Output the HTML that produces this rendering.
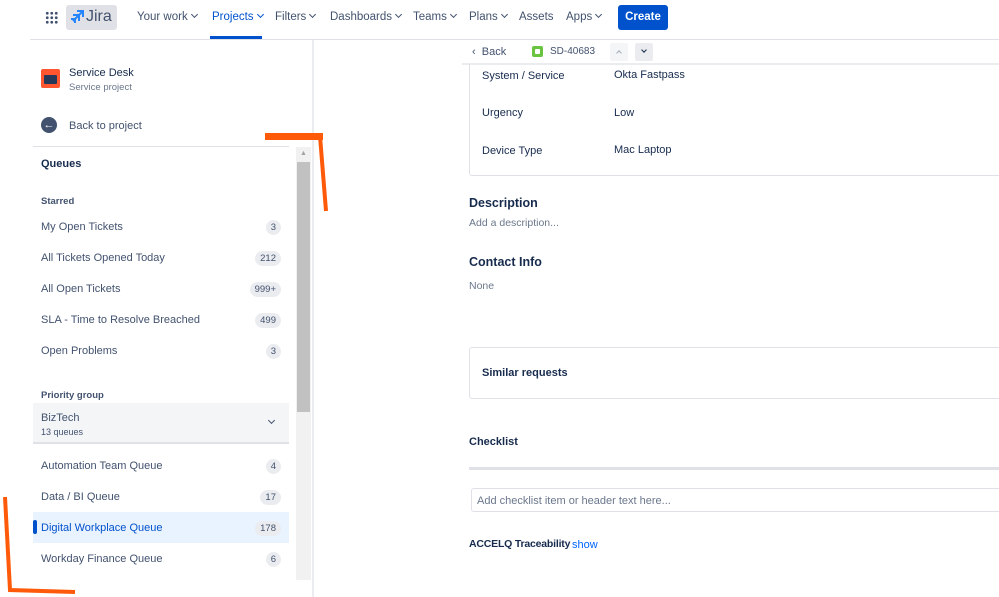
<!DOCTYPE html>
<html><head><style>
*{box-sizing:border-box;margin:0;padding:0}
body{width:999px;height:597px;overflow:hidden;background:#fff;font-family:"Liberation Sans",sans-serif;color:#172b4d;position:relative;font-size:11px}
.a{position:absolute}
.nav span{position:absolute;top:11px;font-size:11.5px;color:#42526e;white-space:nowrap}
.nav i{display:inline-block;width:5px;height:5px;border-right:1.3px solid #42526e;border-bottom:1.3px solid #42526e;transform:rotate(45deg);margin-left:4px;position:relative;top:-3px}
.b{position:absolute;right:0;font-size:9.5px;color:#42526e;background:#ebecf0;border-radius:8px;padding:2px 5px;top:-1px}
.qr{position:absolute;left:33px;width:256px;height:31px}
.qr .t{position:absolute;left:8px;top:10px;font-size:11px;color:#42526e}
.qr .b{right:8px;top:9px}
</style></head><body>
<div class="a" style="left:45px;top:11px;width:13px;height:13px;background:radial-gradient(circle,#42526e 1.3px,transparent 1.6px) 0 0/4.5px 4.5px"></div>
<div class="a" style="left:66px;top:5px;width:51px;height:25px;background:#dfe1e6;border-radius:3px"></div>
<svg class="a" style="left:70px;top:10px" width="14" height="14" viewBox="0 0 14 14"><path d="M7 1h6v6M13 1L7 7M3 5h6v6M9 5L3 11M1 9h4v4" stroke="#2684ff" stroke-width="2" fill="none"/></svg>
<div class="a" style="left:86px;top:8px;font-size:16px;color:#42526e">Jira</div>
<div class="nav">
<span style="left:137px">Your work<i></i></span>
<span style="left:212px;color:#0052cc">Projects<i style="border-color:#0052cc"></i></span>
<span style="left:275px">Filters<i></i></span>
<span style="left:330px">Dashboards<i></i></span>
<span style="left:413px">Teams<i></i></span>
<span style="left:469px">Plans<i></i></span>
<span style="left:519px">Assets</span>
<span style="left:566px">Apps<i></i></span>
</div>
<div class="a" style="left:210px;top:36px;width:52px;height:3px;background:#0052cc"></div>
<div class="a" style="left:618px;top:5px;width:50px;height:25px;background:#0052cc;border-radius:3px;color:#fff;font-size:11.5px;text-align:center;line-height:25px;font-weight:bold;padding-top:0">Create</div>
<div class="a" style="left:30px;top:39px;width:969px;height:1px;background:#dfe1e6"></div>
<div class="a" style="left:312px;top:40px;width:2px;height:557px;background:#ebecf0"></div>
<div class="a" style="left:41px;top:69px;width:19px;height:19px;background:#ff5630;border-radius:2px"></div>
<div class="a" style="left:44px;top:75px;width:13px;height:9px;background:#253858;border-radius:1px"></div>
<div class="a" style="left:69px;top:67px;font-size:11px;color:#172b4d">Service Desk</div>
<div class="a" style="left:69px;top:82px;font-size:9.5px;color:#6b778c">Service project</div>
<div class="a" style="left:41px;top:117px;width:16px;height:16px;border-radius:50%;background:#42526e;color:#fff;font-size:11px;text-align:center;line-height:16px;font-weight:bold">←</div>
<div class="a" style="left:69px;top:120px;font-size:11px;color:#42526e">Back to project</div>
<div class="a" style="left:33px;top:146px;width:256px;height:1px;background:#dfe1e6"></div>
<div class="a" style="left:41px;top:158px;font-size:11px;color:#172b4d;font-weight:bold">Queues</div>
<div class="a" style="left:41px;top:196px;font-size:9.5px;color:#42526e;font-weight:bold">Starred</div>
<div class="qr" style="top:211px"><span class="t">My Open Tickets</span><span class="b">3</span></div>
<div class="qr" style="top:242px"><span class="t">All Tickets Opened Today</span><span class="b">212</span></div>
<div class="qr" style="top:273px"><span class="t">All Open Tickets</span><span class="b">999+</span></div>
<div class="qr" style="top:304px"><span class="t">SLA - Time to Resolve Breached</span><span class="b">499</span></div>
<div class="qr" style="top:335px"><span class="t">Open Problems</span><span class="b">3</span></div>
<div class="a" style="left:41px;top:390px;font-size:9.5px;color:#42526e;font-weight:bold">Priority group</div>
<div class="a" style="left:33px;top:403px;width:256px;height:41px;background:#f4f5f7;border-bottom:2px solid #dfe1e6"></div>
<div class="a" style="left:41px;top:412px;font-size:11px;color:#42526e">BizTech</div>
<div class="a" style="left:41px;top:427px;font-size:9px;color:#42526e">13 queues</div>
<div class="a" style="left:269px;top:418px;width:5px;height:5px;border-right:1.3px solid #42526e;border-bottom:1.3px solid #42526e;transform:rotate(45deg)"></div>
<div class="qr" style="top:450px"><span class="t">Automation Team Queue</span><span class="b">4</span></div>
<div class="qr" style="top:481px"><span class="t">Data / BI Queue</span><span class="b">17</span></div>
<div class="qr" style="top:512px;background:#e9f2ff"><span class="t" style="color:#0052cc">Digital Workplace Queue</span><span class="b">178</span></div>
<div class="a" style="left:33px;top:520px;width:4px;height:14px;background:#0052cc;border-radius:2px"></div>
<div class="qr" style="top:543px"><span class="t">Workday Finance Queue</span><span class="b">6</span></div>
<div class="a" style="left:296px;top:147px;width:15px;height:433px;background:#f1f1f1"></div>
<div class="a" style="left:297px;top:162px;width:13px;height:250px;background:#c1c1c1"></div>
<div class="a" style="left:300px;top:150px;font-size:7px;color:#a3a3a3">▲</div>
<div class="a" style="left:265px;top:133px;width:58px;height:7px;background:#ff5a0a"></div>
<svg class="a" style="left:0;top:0" width="999" height="597"><path d="M320 136 L326 211" stroke="#ff5a0a" stroke-width="4" fill="none"/><path d="M5 497 L10 590 L75 592" stroke="#ff5a0a" stroke-width="4" fill="none"/></svg>
<div class="a" style="left:472px;top:46px;font-size:11px;color:#42526e">‹&nbsp;&nbsp;Back</div>
<div class="a" style="left:532px;top:46px;width:11px;height:11px;background:#6ac43f;border-radius:2px"></div>
<div class="a" style="left:535px;top:49px;width:5px;height:5px;background:#fff;border-radius:1px"></div>
<div class="a" style="left:550px;top:46px;font-size:10px;color:#42526e">SD-40683</div>
<div class="a" style="left:610px;top:43px;width:18px;height:18px;background:#f4f5f7;border-radius:2px"></div>
<div class="a" style="left:617px;top:51px;width:4px;height:4px;border-left:1px solid #a5adba;border-top:1px solid #a5adba;transform:rotate(45deg)"></div>
<div class="a" style="left:635px;top:43px;width:18px;height:18px;background:#ebecf0;border-radius:2px"></div>
<div class="a" style="left:642px;top:48px;width:4px;height:4px;border-right:1.5px solid #172b4d;border-bottom:1.5px solid #172b4d;transform:rotate(45deg)"></div>
<div class="a" style="left:462px;top:63px;width:537px;height:2px;background:#ebecf0"></div>
<div class="a" style="left:469px;top:64px;width:540px;height:112px;border:1px solid #dfe1e6;border-top:none;border-radius:0 0 3px 3px"></div>
<div class="a" style="left:482px;top:70px;font-size:11px;color:#172b4d">System / Service</div>
<div class="a" style="left:614px;top:69px;font-size:11px;color:#172b4d">Okta Fastpass</div>
<div class="a" style="left:482px;top:107px;font-size:11px;color:#172b4d">Urgency</div>
<div class="a" style="left:614px;top:107px;font-size:11px;color:#172b4d">Low</div>
<div class="a" style="left:482px;top:145px;font-size:11px;color:#172b4d">Device Type</div>
<div class="a" style="left:614px;top:144px;font-size:11px;color:#172b4d">Mac Laptop</div>
<div class="a" style="left:469px;top:196px;font-size:12.5px;color:#172b4d;font-weight:bold">Description</div>
<div class="a" style="left:469px;top:217px;font-size:10.5px;color:#6b778c">Add a description...</div>
<div class="a" style="left:469px;top:255px;font-size:12.5px;color:#172b4d;font-weight:bold">Contact Info</div>
<div class="a" style="left:469px;top:280px;font-size:10.5px;color:#6b778c">None</div>
<div class="a" style="left:469px;top:347px;width:540px;height:52px;border:1px solid #dfe1e6;border-radius:3px"></div>
<div class="a" style="left:482px;top:367px;font-size:11px;color:#172b4d;font-weight:bold">Similar requests</div>
<div class="a" style="left:469px;top:436px;font-size:11px;color:#172b4d;font-weight:bold">Checklist</div>
<div class="a" style="left:469px;top:467px;width:530px;height:3px;background:#dfe1e6"></div>
<div class="a" style="left:471px;top:488px;width:540px;height:24px;border:1px solid #dfe1e6;border-radius:3px"></div>
<div class="a" style="left:477px;top:495px;font-size:11px;color:#6b778c">Add checklist item or header text here...</div>
<div class="a" style="left:469px;top:538px;font-size:10.5px;color:#172b4d;font-weight:bold;letter-spacing:-0.2px">ACCELQ Traceability</div>
<div class="a" style="left:572px;top:539px;font-size:11px;color:#0065ff">show</div>
</body></html>
